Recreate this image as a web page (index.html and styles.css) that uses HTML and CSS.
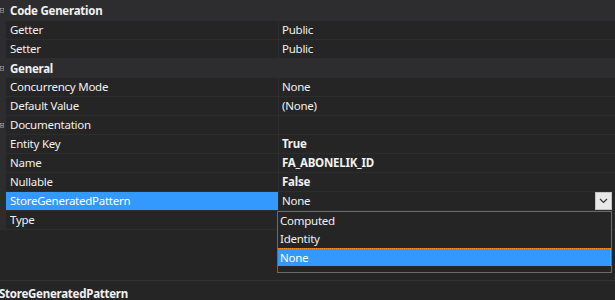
FILE: index.html
```html
<!DOCTYPE html>
<html lang="en">
<head>
    <meta charset="UTF-8">
    <title>Properties</title>
    <link rel="stylesheet" href="styles.css">
</head>
<body>
    <div id="props">
        <div class="grid">
            <div class="cat first">
                <span class="expander"><svg width="9" height="9" viewBox="0 0 9 9"><rect x="0.5" y="0.5" width="8" height="8" fill="none" stroke="#c8c8c8"/><path d="M2 4.5h5" stroke="#c8c8c8"/></svg></span>
                <span class="cat-label">Code Generation</span>
            </div>
            <div class="prop"><div class="gutter"></div><div class="name">Getter</div><div class="value">Public</div></div>
            <div class="prop"><div class="gutter"></div><div class="name">Setter</div><div class="value">Public</div></div>

            <div class="cat">
                <span class="expander"><svg width="9" height="9" viewBox="0 0 9 9"><rect x="0.5" y="0.5" width="8" height="8" fill="none" stroke="#c8c8c8"/><path d="M2 4.5h5" stroke="#c8c8c8"/></svg></span>
                <span class="cat-label">General</span>
            </div>
            <div class="prop"><div class="gutter"></div><div class="name">Concurrency Mode</div><div class="value">None</div></div>
            <div class="prop"><div class="gutter"></div><div class="name">Default Value</div><div class="value">(None)</div></div>
            <div class="prop">
                <div class="gutter"><span class="expander small"><svg width="9" height="9" viewBox="0 0 9 9"><rect x="0.5" y="0.5" width="8" height="8" fill="none" stroke="#c8c8c8"/><path d="M2 4.5h5M4.5 2v5" stroke="#c8c8c8"/></svg></span></div>
                <div class="name">Documentation</div><div class="value"></div>
            </div>
            <div class="prop"><div class="gutter"></div><div class="name">Entity Key</div><div class="value bold">True</div></div>
            <div class="prop"><div class="gutter"></div><div class="name">Name</div><div class="value bold">FA_ABONELIK_ID</div></div>
            <div class="prop"><div class="gutter"></div><div class="name">Nullable</div><div class="value bold">False</div></div>
            <div class="prop selected">
                <div class="gutter"></div>
                <div class="name">StoreGeneratedPattern</div>
                <div class="value editor">
                    <span class="edit-text">None</span>
                    <span class="drop-btn"><svg width="9" height="6" viewBox="0 0 9 6"><path d="M1 1l3.5 3.5L8 1" fill="none" stroke="#333" stroke-width="1.2"/></svg></span>
                </div>
            </div>
            <div class="prop"><div class="gutter"></div><div class="name">Type</div><div class="value"></div></div>
        </div>

        <div class="filler"></div>

        <div class="desc">
            <div class="desc-title">StoreGeneratedPattern</div>
        </div>

        <!-- open dropdown list of the selected property -->
        <div class="listbox">
            <div class="option">Computed</div>
            <div class="option">Identity</div>
            <div class="option active">None</div>
        </div>
    </div>
</body>
</html>
```

FILE: styles.css
```css
body {
    margin: 0;
    padding: 0;
    background: #252526;
    font-family: "Noto Sans", "Open Sans", sans-serif;
    font-size: 11.5px;
    letter-spacing: -0.25px;
    color: #f1f1f1;
    overflow: hidden;
}

#props {
    position: relative;
    width: 615px;
    height: 300px;
    display: flex;
    flex-direction: column;
}

.grid {
    display: flex;
    flex-direction: column;
}

.cat {
    display: flex;
    align-items: center;
    height: 18px;
    border-bottom: 1px solid #2d2d30;
    background: #2d2d30;
    font-weight: bold;
}

.cat.first {
    height: 20px;
}

/* only the right edge of the expander box is visible */
.expander {
    width: 4px;
    height: 9px;
    margin-right: 2px;
    overflow: hidden;
    display: flex;
    justify-content: flex-end;
    flex-shrink: 0;
}

.expander.small {
    margin-top: 5px;
}

.cat-label {
    padding-left: 4px;
}

.prop {
    display: flex;
    height: 18px;
    border-bottom: 1px solid #2d2d30;
}

.gutter {
    width: 6px;
    flex-shrink: 0;
    background: #2d2d30;
}

.name {
    width: 268px;
    padding-left: 4px;
    line-height: 18px;
    background: #252526;
    border-right: 1px solid #2d2d30;
    white-space: nowrap;
}

.value {
    flex: 1;
    padding-left: 3px;
    line-height: 18px;
    background: #252526;
    white-space: nowrap;
}

.bold {
    font-weight: bold;
}

.selected .name {
    background: #3399ff;
    color: #fff;
}

.editor {
    display: flex;
    align-items: center;
    justify-content: space-between;
    padding-right: 3px;
}

.drop-btn {
    width: 15px;
    height: 16px;
    background: #e8e8e8;
    border: 1px solid #c4c4c4;
    display: flex;
    align-items: center;
    justify-content: center;
}

.filler {
    flex: 1;
    border-bottom: 1px solid #333337;
}

.desc {
    height: 19px;
}

.desc-title {
    font-weight: bold;
    margin-left: -1px;
    line-height: 25px;
}

.listbox {
    position: absolute;
    left: 277px;
    top: 211px;
    width: 333px;
    height: 60px;
    border: 1px solid #6a6a6a;
    background: #252526;
}

.option {
    height: 18px;
    line-height: 18px;
    padding-left: 2px;
}

.option.active {
    background: #3399ff;
    color: #fff;
    border-top: 1px dotted #ff8c1a;
    border-right: 1px dotted #ff8c1a;
    height: 17px;
    line-height: 17px;
}
```
